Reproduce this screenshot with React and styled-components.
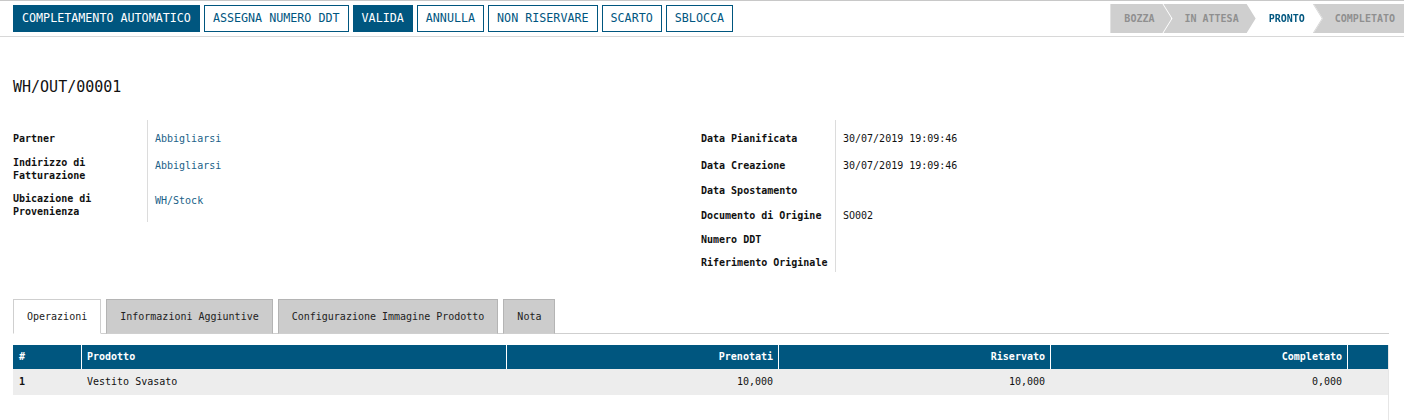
import React from 'react'
import styled, { createGlobalStyle } from 'styled-components'

const BLUE = '#00567f'
const MONO = '"DejaVu Sans Mono", "Liberation Mono", monospace'

const GlobalStyle = createGlobalStyle`
  html, body {
    margin: 0;
    padding: 0;
    background: #fff;
    font-family: ${MONO};
    color: #222;
  }
`

const ControlPanel = styled.div`
  display: flex;
  justify-content: space-between;
  align-items: flex-start;
  height: 35px;
  border-top: 1px solid #c8c8c8;
  border-bottom: 1px solid #d8d8d8;
`

const Buttons = styled.div`
  display: flex;
  gap: 4px;
  padding: 4px 0 0 13px;
`

const Button = styled.button`
  height: 27px;
  padding: 0 8px;
  border: 1px solid ${BLUE};
  border-radius: 0;
  background: ${(p) => (p.$primary ? BLUE : '#fff')};
  color: ${(p) => (p.$primary ? '#fff' : BLUE)};
  font-family: ${MONO};
  font-size: 11.7px;
  line-height: 25px;
  white-space: nowrap;
`

const StatusBar = styled.div`
  display: flex;
  margin-top: 3px;
  height: 29px;
`

const StepWrap = styled.div`
  display: flex;
  margin-left: ${(p) => (p.$first ? 0 : -8)}px;
  filter: ${(p) => (p.$active ? 'drop-shadow(1px 0 0 #d6d6d6)' : 'none')};
  position: relative;
  z-index: ${(p) => (p.$active ? 1 : 0)};
`

const Step = styled.div`
  height: 29px;
  line-height: 29px;
  font-size: 10px;
  font-weight: bold;
  white-space: nowrap;
  background: ${(p) => (p.$active ? '#fff' : '#cfcfcf')};
  color: ${(p) => (p.$active ? BLUE : '#8f8f8f')};
  padding: 0 ${(p) => (p.$last ? 9 : 17)}px 0 ${(p) => (p.$first ? 14 : 21)}px;
  clip-path: ${(p) =>
    p.$first
      ? 'polygon(0 0, calc(100% - 9px) 0, 100% 50%, calc(100% - 9px) 100%, 0 100%)'
      : p.$last
        ? 'polygon(0 0, 100% 0, 100% 100%, 0 100%, 9px 50%)'
        : 'polygon(0 0, calc(100% - 9px) 0, 100% 50%, calc(100% - 9px) 100%, 0 100%, 9px 50%)'};
`

const Sheet = styled.div`
  padding: 41px 15px 0 13px;
`

const Title = styled.h1`
  margin: 0;
  font-size: 15px;
  line-height: 18px;
  font-weight: normal;
  color: #111;
`

const Groups = styled.div`
  display: grid;
  grid-template-columns: 1fr 1fr;
  margin-top: 24px;
  align-items: start;
`

const Group = styled.div`
  display: flex;
`

const LabelCol = styled.div`
  width: 134px;
  flex: none;
  border-right: 1px solid #dcdcdc;
  padding: 7px 0 ${(p) => p.$pad}px;
`

const ValueCol = styled.div`
  flex: 1;
  padding: 7px 0 0 7px;
`

const Label = styled.div`
  height: ${(p) => p.$h}px;
  padding-top: 5px;
  box-sizing: border-box;
  font-size: 10px;
  line-height: 13px;
  font-weight: bold;
  color: #111;
`

const Value = styled.div`
  height: ${(p) => p.$h}px;
  padding-top: 5px;
  box-sizing: border-box;
  font-size: 10px;
  line-height: 13px;
  color: ${(p) => (p.$link ? '#1a5f88' : '#111')};
`

const Tabs = styled.div`
  display: flex;
  gap: 5px;
  margin-top: 27px;
  border-bottom: 1px solid #cfcfcf;
`

const Tab = styled.div`
  height: 35px;
  box-sizing: border-box;
  margin-bottom: -1px;
  padding: 0 13px;
  line-height: 33px;
  font-size: 10px;
  white-space: nowrap;
  border: 1px solid ${(p) => (p.$active ? '#cfcfcf' : '#b4b4b4')};
  border-bottom-color: ${(p) => (p.$active ? '#fff' : '#cfcfcf')};
  background: ${(p) => (p.$active ? '#fff' : '#cccccc')};
  color: #222;
`

const Table = styled.div`
  margin-top: 11px;
  display: grid;
  grid-template-columns: 68px 425px 272px 272px 297px 1fr;
  border-right: 1px solid #e6e6e6;
  min-height: 75px;
  align-content: start;
`

const Head = styled.div`
  height: 24px;
  line-height: 24px;
  padding: 0 5px 0 ${(p) => (p.$first ? 6 : 5)}px;
  background: ${BLUE};
  color: #fff;
  font-size: 10px;
  font-weight: bold;
  text-align: ${(p) => (p.$right ? 'right' : 'left')};
  border-left: ${(p) => (p.$first ? 'none' : '1px solid #fff')};
`

const Cell = styled.div`
  height: 26px;
  line-height: 26px;
  padding: 0 5px 0 ${(p) => (p.$first ? 6 : 5)}px;
  background: #ededed;
  font-size: 10px;
  font-weight: ${(p) => (p.$bold ? 'bold' : 'normal')};
  text-align: ${(p) => (p.$right ? 'right' : 'left')};
  border-left: ${(p) => (p.$first ? 'none' : '1px solid #ededed')};
  color: #111;
`

const actions = [
  { label: 'COMPLETAMENTO AUTOMATICO', primary: true },
  { label: 'ASSEGNA NUMERO DDT' },
  { label: 'VALIDA', primary: true },
  { label: 'ANNULLA' },
  { label: 'NON RISERVARE' },
  { label: 'SCARTO' },
  { label: 'SBLOCCA' },
]

const steps = ['BOZZA', 'IN ATTESA', 'PRONTO', 'COMPLETATO']

const leftFields = [
  { label: 'Partner', value: 'Abbigliarsi', h: 24, vh: 27 },
  { label: 'Indirizzo di Fatturazione', value: 'Abbigliarsi', h: 36, vh: 35 },
  { label: 'Ubicazione di Provenienza', value: 'WH/Stock', h: 33, vh: 31 },
]

const rightFields = [
  { label: 'Data Pianificata', value: '30/07/2019 19:09:46', h: 27 },
  { label: 'Data Creazione', value: '30/07/2019 19:09:46', h: 25 },
  { label: 'Data Spostamento', value: '', h: 25 },
  { label: 'Documento di Origine', value: 'SO002', h: 24 },
  { label: 'Numero DDT', value: '', h: 23 },
  { label: 'Riferimento Originale', value: '', h: 21 },
]

const tabs = ['Operazioni', 'Informazioni Aggiuntive', 'Configurazione Immagine Prodotto', 'Nota']

const columns = [
  { label: '#' },
  { label: 'Prodotto' },
  { label: 'Prenotati', right: true },
  { label: 'Riservato', right: true },
  { label: 'Completato', right: true },
  { label: '' },
]

const rows = [['1', 'Vestito Svasato', '10,000', '10,000', '0,000', '']]

function FieldGroup({ fields, link, pad }) {
  return (
    <Group>
      <LabelCol $pad={pad}>
        {fields.map((f) => (
          <Label key={f.label} $h={f.h}>
            {f.label}
          </Label>
        ))}
      </LabelCol>
      <ValueCol>
        {fields.map((f) => (
          <Value key={f.label} $h={f.vh || f.h} $link={link}>
            {f.value}
          </Value>
        ))}
      </ValueCol>
    </Group>
  )
}

export default function App() {
  return (
    <>
      <GlobalStyle />
      <ControlPanel>
        <Buttons>
          {actions.map((a) => (
            <Button key={a.label} $primary={a.primary}>
              {a.label}
            </Button>
          ))}
        </Buttons>
        <StatusBar>
          {steps.map((s, i) => (
            <StepWrap key={s} $first={i === 0} $active={s === 'PRONTO'}>
              <Step
                $first={i === 0}
                $last={i === steps.length - 1}
                $active={s === 'PRONTO'}
              >
                {s}
              </Step>
            </StepWrap>
          ))}
        </StatusBar>
      </ControlPanel>

      <Sheet>
        <Title>WH/OUT/00001</Title>
        <Groups>
          <FieldGroup fields={leftFields} link pad={2} />
          <FieldGroup fields={rightFields} pad={0} />
        </Groups>

        <Tabs>
          {tabs.map((t, i) => (
            <Tab key={t} $active={i === 0}>
              {t}
            </Tab>
          ))}
        </Tabs>

        <Table>
          {columns.map((c, i) => (
            <Head key={i} $first={i === 0} $right={c.right}>
              {c.label}
            </Head>
          ))}
          {rows.map((r) =>
            r.map((v, i) => (
              <Cell key={i} $first={i === 0} $bold={i === 0} $right={i >= 2}>
                {v}
              </Cell>
            ))
          )}
        </Table>
      </Sheet>
    </>
  )
}
